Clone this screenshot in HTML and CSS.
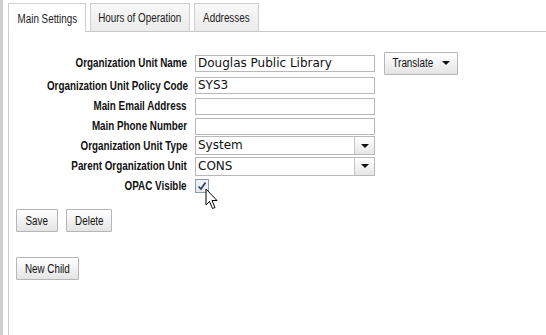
FILE: index.html
```html
<!DOCTYPE html>
<html>
<head>
<meta charset="utf-8">
<link rel="stylesheet" href="styles.css">
</head>
<body>
<div class="app">
  <div class="splitter"></div>
  <div class="panel">
    <div class="tabs">
      <div class="tab active w-main"><span class="nt">Main Settings</span></div>
      <div class="tab w-hours"><span class="nt">Hours of Operation</span></div>
      <div class="tab w-addr"><span class="nt">Addresses</span></div>
    </div>
    <div class="content">
      <div class="form">
        <label class="lbl"><span class="nt">Organization Unit Name</span></label>
        <div class="field"><div class="input">Douglas Public Library</div><button class="btn translate"><span class="nt">Translate</span><span class="caret"></span></button></div>
        <label class="lbl"><span class="nt">Organization Unit Policy Code</span></label>
        <div class="field"><div class="input">SYS3</div></div>
        <label class="lbl"><span class="nt">Main Email Address</span></label>
        <div class="field"><div class="input"></div></div>
        <label class="lbl"><span class="nt">Main Phone Number</span></label>
        <div class="field"><div class="input"></div></div>
        <label class="lbl"><span class="nt">Organization Unit Type</span></label>
        <div class="field"><div class="select"><span class="sel-text">System</span><span class="sel-arrow"><span class="caret"></span></span></div></div>
        <label class="lbl"><span class="nt">Parent Organization Unit</span></label>
        <div class="field"><div class="select"><span class="sel-text">CONS</span><span class="sel-arrow"><span class="caret"></span></span></div></div>
        <label class="lbl"><span class="nt">OPAC Visible</span></label>
        <div class="field"><span class="check"><svg width="12" height="12" viewBox="0 0 12 12"><path d="M2.5 6.5 L5 9 L9.5 2.5" fill="none" stroke="#233a5a" stroke-width="1.6"/></svg></span></div>
      </div>
      <div class="actions">
        <button class="btn w-save"><span class="nt">Save</span></button>
        <button class="btn w-del"><span class="nt">Delete</span></button>
      </div>
      <div class="actions second">
        <button class="btn w-new"><span class="nt">New Child</span></button>
      </div>
      <svg class="cursor" width="14" height="22" viewBox="0 0 14 22"><path d="M1 1 L1 17 L4.5 13.5 L7.5 20.5 L10 19.5 L7 12.5 L12 12.5 Z" fill="#fff" stroke="#000" stroke-width="1" stroke-linejoin="miter"/></svg>
    </div>
  </div>
</div>
</body>
</html>
```
FILE: styles.css
```css
html, body {
  margin: 0;
  padding: 0;
  background: #fff;
}
body {
  font-family: "Liberation Sans", Arial, sans-serif;
  font-size: 12px;
  color: #000;
  width: 546px;
  height: 335px;
  overflow: hidden;
}
/* narrow (Arial Narrow-like) rendering of text */
.nt {
  display: inline-block;
  transform: scaleX(0.82);
  white-space: nowrap;
}
.app {
  display: flex;
  height: 335px;
}
.splitter {
  width: 3px;
  background: #cfcfcf;
  margin-right: 5px;
}
.panel {
  flex: 1;
  display: flex;
  flex-direction: column;
}
.tabs {
  display: flex;
  gap: 4px;
  padding-top: 3px;
  border-bottom: 1px solid #c8c8c8;
  height: 28px;
}
.tab {
  align-self: flex-start;
  height: 28px;
  box-sizing: border-box;
  border: 1px solid #cfcfcf;
  border-bottom: none;
  background: linear-gradient(#f7f7f7, #ececec);
  padding-top: 1px;
  display: flex;
  align-items: center;
  justify-content: center;
  color: #1a1a1a;
}
.tab.active {
  background: #fff;
  height: 29px;
  margin-bottom: -1px;
}
.w-main { width: 78px; }
.w-hours { width: 100px; }
.w-addr { width: 65px; }
.content {
  flex: 1;
  position: relative;
  border-left: 1px solid #c8c8c8;
  padding: 19px 0 0 7px;
}
.form {
  display: grid;
  grid-template-columns: 171px auto;
  grid-template-rows: 24px 21px 20px 20px 19px 22px 18px;
  column-gap: 8px;
  align-items: center;
}
.lbl {
  font-weight: bold;
  text-align: right;
  white-space: nowrap;
  color: #111;
}
.lbl .nt {
  transform-origin: right center;
}
.field {
  display: flex;
  align-items: center;
}
.input, .select {
  width: 180px;
  height: 17px;
  box-sizing: border-box;
  border: 1px solid #b8b8b8;
  font-family: "DejaVu Sans", Verdana, sans-serif;
  font-size: 12px;
  line-height: 15px;
  padding-left: 2px;
  color: #111;
  background: #fff;
}
.select {
  height: 19px;
  line-height: 17px;
  display: flex;
  padding-left: 0;
}
.sel-text {
  flex: 1;
  padding-left: 2px;
}
.sel-arrow {
  width: 19px;
  border-left: 1px solid #c4c4c4;
  background: linear-gradient(#ffffff, #e6e6e6);
  display: flex;
  align-items: center;
  justify-content: center;
}
.caret {
  display: inline-block;
  width: 0;
  height: 0;
  border-left: 4px solid transparent;
  border-right: 4px solid transparent;
  border-top: 4px solid #111;
}
.btn {
  font-family: "Liberation Sans", Arial, sans-serif;
  font-size: 12px;
  color: #111;
  height: 23px;
  padding: 0;
  border: 1px solid #b5b5b5;
  border-radius: 1px;
  background: linear-gradient(#ffffff, #e4e4e4);
  margin: 0;
  display: flex;
  align-items: center;
  justify-content: center;
}
.translate {
  margin-left: 9px;
  width: 74px;
  height: 23px;
}
.translate .nt {
  margin-left: -4px;
}
.translate .caret {
  margin-left: 4px;
}
.w-save { width: 42px; }
.w-del { width: 46px; }
.w-new { width: 63px; }
.check {
  width: 14px;
  height: 14px;
  box-sizing: border-box;
  border: 1px solid #8a9bb0;
  background: linear-gradient(#f3f5f8, #e3e7ec);
  display: flex;
  align-items: center;
  justify-content: center;
}
.actions {
  display: flex;
  gap: 8px;
  margin-top: 14px;
}
.actions.second {
  margin-top: 25px;
}
.cursor {
  position: absolute;
  left: 196px;
  top: 156px;
}
```
